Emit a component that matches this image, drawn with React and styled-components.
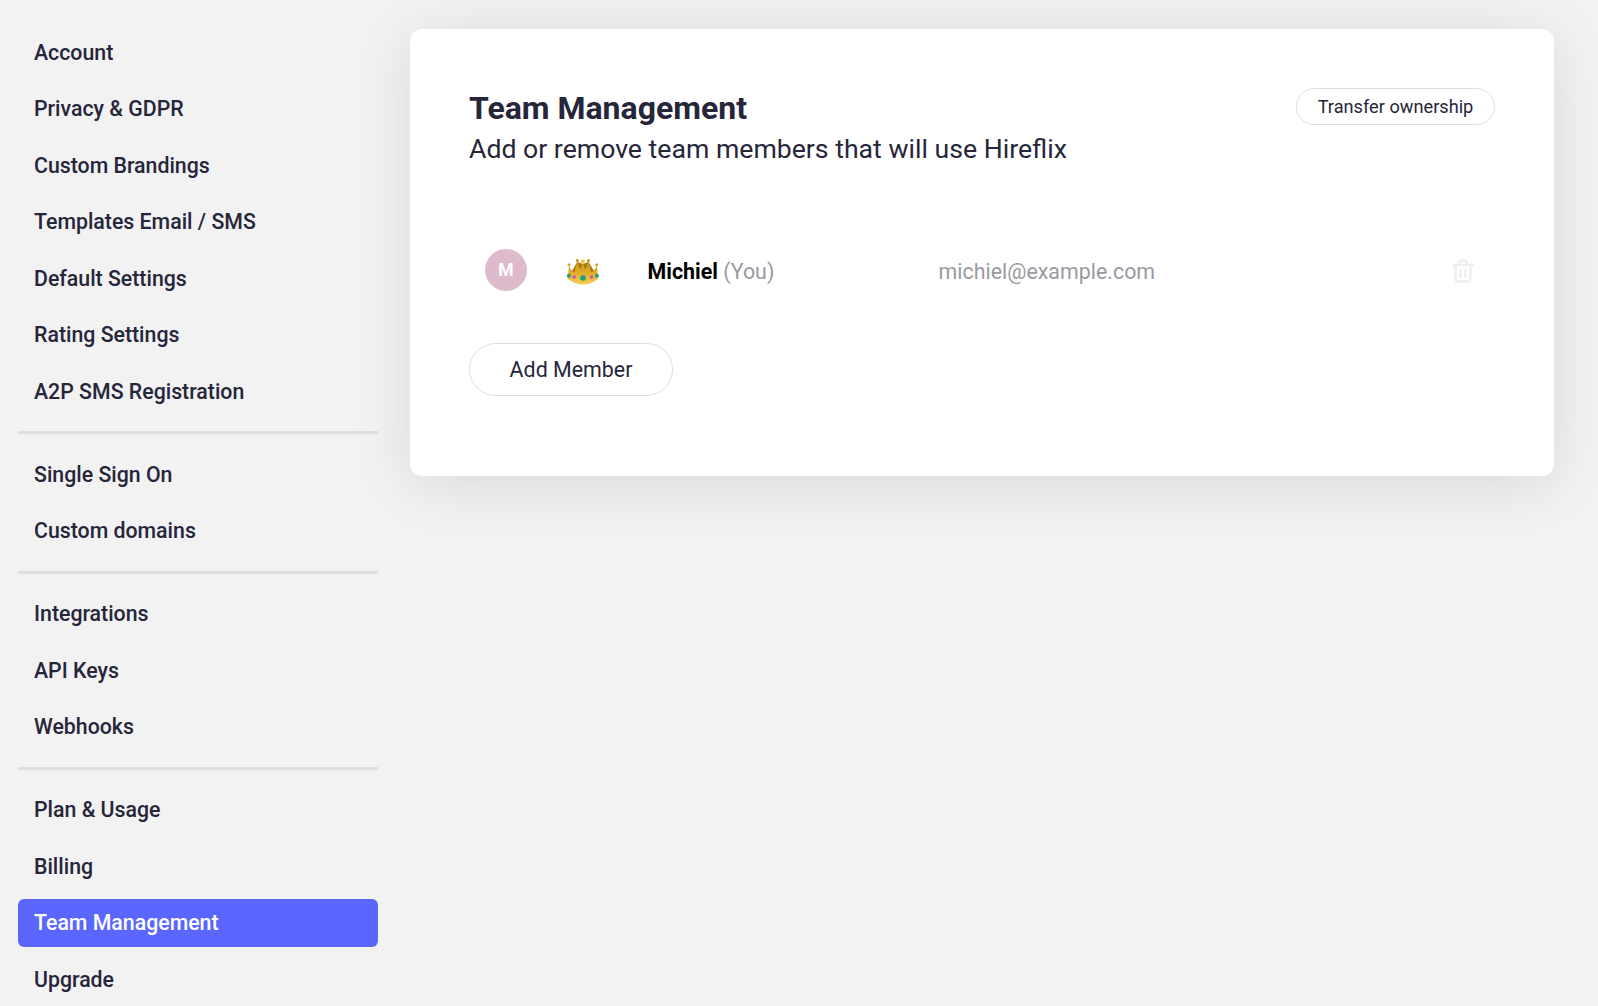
import React from 'react';
import styled, { createGlobalStyle } from 'styled-components';

const groups = [
  ['Account', 'Privacy & GDPR', 'Custom Brandings', 'Templates Email / SMS', 'Default Settings', 'Rating Settings', 'A2P SMS Registration'],
  ['Single Sign On', 'Custom domains'],
  ['Integrations', 'API Keys', 'Webhooks'],
  ['Plan & Usage', 'Billing', 'Team Management', 'Upgrade'],
];

const CrownIcon = () => (
  <svg width="32" height="28" viewBox="0 0 32 28">
    <defs>
      <linearGradient id="gold" x1="0" y1="0" x2="0" y2="1">
        <stop offset="0" stopColor="#c8941a" />
        <stop offset="0.55" stopColor="#e2b02c" />
        <stop offset="1" stopColor="#f3d058" />
      </linearGradient>
    </defs>
    <path d="M5 12 L10.3 3 L15.8 5 L21.5 3 L27 12 L27 20 L5 20 Z" fill="#a8760f" />
    <path d="M2 6.5 Q4 12 7.4 13.5 Q9 8 10.3 2 Q11.5 7 13.4 10.5 Q14.8 7 15.8 3 Q16.8 7 18.2 10.5 Q20 7 21.5 2 Q22.7 8 24.3 13.5 Q27.6 12 29.8 6.5 L31 20 Q16 31 0.8 20 Z" fill="url(#gold)" />
    <circle cx="2" cy="5.7" r="1.5" fill="#d8a422" />
    <circle cx="10.3" cy="1.5" r="1.5" fill="#c8921a" />
    <circle cx="15.8" cy="2.6" r="2" fill="#f2c93f" />
    <circle cx="21.5" cy="1.5" r="1.5" fill="#c8921a" />
    <circle cx="29.7" cy="5.7" r="1.5" fill="#d8a422" />
    <circle cx="1.9" cy="16.7" r="2" fill="#1f9c80" />
    <circle cx="7.2" cy="18" r="1.8" fill="#d350b2" />
    <circle cx="16" cy="19" r="2.8" fill="#17a07c" />
    <circle cx="24.6" cy="18" r="1.8" fill="#d350b2" />
    <circle cx="29.9" cy="16.7" r="2" fill="#1f9c80" />
  </svg>
);

const TrashIcon = () => (
  <svg width="22" height="24" viewBox="0 0 22 24" fill="none" stroke="#eeeeee" strokeWidth="2.4" strokeLinecap="round" strokeLinejoin="round">
    <path d="M1.5 6h19" />
    <path d="M7.5 6V3.5a2 2 0 0 1 2-2h3a2 2 0 0 1 2 2V6" />
    <path d="M3.5 6v14a2.5 2.5 0 0 0 2.5 2.5h10a2.5 2.5 0 0 0 2.5-2.5V6" />
    <path d="M8.7 11v7M13.3 11v7" />
  </svg>
);

const App = () => (
  <>
    <GlobalStyle />
    <Page>
      <Sidebar>
        {groups.map((group, i) => (
          <React.Fragment key={group[0]}>
            {i > 0 && <Divider />}
            {group.map(label => (
              <NavItem key={label} $active={label === 'Team Management'}>
                {label}
              </NavItem>
            ))}
          </React.Fragment>
        ))}
      </Sidebar>
      <Main>
        <Card>
          <CardHeader>
            <div>
              <Title>Team Management</Title>
              <Subtitle>Add or remove team members that will use Hireflix</Subtitle>
            </div>
            <TransferButton>Transfer ownership</TransferButton>
          </CardHeader>
          <MemberRow>
            <Avatar>M</Avatar>
            <CrownCell>
              <CrownIcon />
            </CrownCell>
            <MemberName>
              <strong>Michiel</strong> <span>(You)</span>
            </MemberName>
            <MemberEmail>michiel@example.com</MemberEmail>
            <DeleteButton>
              <TrashIcon />
            </DeleteButton>
          </MemberRow>
          <AddButton>Add Member</AddButton>
        </Card>
      </Main>
    </Page>
  </>
);

export default App;

const GlobalStyle = createGlobalStyle`
  html, body {
    margin: 0;
    padding: 0;
    background-color: #f2f2f2;
  }
  * {
    box-sizing: border-box;
  }
  body {
    font-family: Roboto, "Liberation Sans", sans-serif;
    color: #26263a;
  }
`;

const Page = styled.div`
  display: flex;
  height: 1006px;
  overflow: hidden;
  background-color: #f2f2f2;
`;

const Sidebar = styled.nav`
  width: 360px;
  flex-shrink: 0;
  margin-left: 18px;
  padding-top: 28.5px;
  display: flex;
  flex-direction: column;
`;

const NavItem = styled.div`
  height: 48px;
  flex-shrink: 0;
  margin-bottom: 8.45px;
  padding-left: 16px;
  display: flex;
  align-items: center;
  border-radius: 6px;
  font-size: 21.3px;
  font-weight: 500;
  color: ${props => (props.$active ? '#ffffff' : '#26263a')};
  background-color: ${props => (props.$active ? '#5a67ff' : 'transparent')};
`;

const Divider = styled.div`
  height: 3px;
  flex-shrink: 0;
  margin: 7.5px 0 16.2px;
  background-color: #dfdfdf;
`;

const Main = styled.main`
  margin-left: 32px;
  padding-top: 29px;
`;

const Card = styled.section`
  width: 1144px;
  height: 447px;
  padding: 59px 59px 0 59px;
  background-color: #ffffff;
  border-radius: 12px;
  box-shadow: 0 8px 60px rgba(0, 0, 0, 0.1);
`;

const CardHeader = styled.header`
  display: flex;
  justify-content: space-between;
  align-items: flex-start;
`;

const Title = styled.h1`
  margin: 0;
  font-size: 32px;
  line-height: 40px;
  font-weight: 700;
  color: #26263a;
`;

const Subtitle = styled.p`
  margin: 1px 0 0;
  font-size: 26.65px;
  line-height: 40px;
  font-weight: 400;
  color: #26263a;
`;

const TransferButton = styled.button`
  height: 37px;
  width: 199px;
  padding: 0;
  font-family: inherit;
  font-size: 18.2px;
  color: #26263a;
  background: #ffffff;
  border: 1px solid #dedede;
  border-radius: 19px;
`;

const MemberRow = styled.div`
  margin-top: 61.5px;
  height: 80px;
  display: flex;
  align-items: center;
  padding-left: 16px;
`;

const Avatar = styled.div`
  width: 42px;
  height: 42px;
  margin-bottom: 1px;
  border-radius: 50%;
  display: flex;
  align-items: center;
  justify-content: center;
  font-size: 17.5px;
  font-weight: 700;
  color: #ffffff;
  background-color: #debacd;
`;

const CrownCell = styled.div`
  width: 32px;
  height: 28px;
  margin: 5px 0 0 40px;
`;

const MemberName = styled.div`
  width: 291px;
  margin: 1px 0 0 48.5px;
  font-size: 21.4px;
  color: #9a9aa2;

  strong {
    font-weight: 700;
    color: #000000;
  }
`;

const MemberEmail = styled.div`
  flex: 1;
  margin-top: 1px;
  font-size: 21.4px;
  color: #9a9aa2;
`;

const DeleteButton = styled.div`
  width: 22px;
  height: 24px;
  margin-right: 21px;
`;

const AddButton = styled.button`
  display: block;
  margin-top: 32.5px;
  width: 204px;
  height: 53px;
  padding: 0;
  font-family: inherit;
  font-size: 21.4px;
  color: #26263a;
  background: #ffffff;
  border: 1px solid #dedede;
  border-radius: 27px;
`;
